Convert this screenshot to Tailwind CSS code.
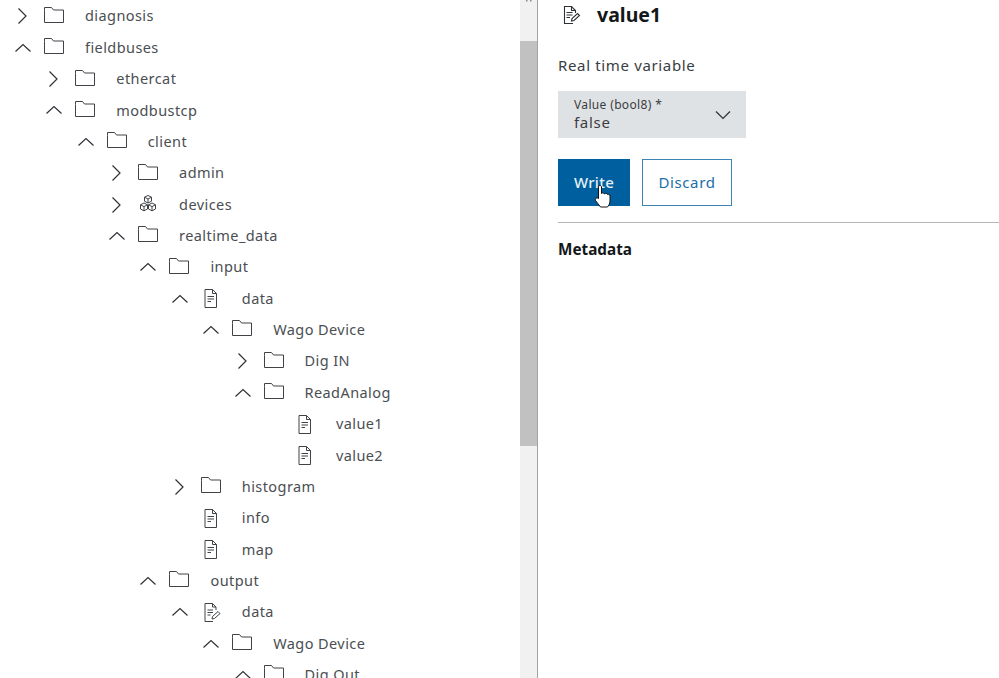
<!DOCTYPE html>
<html lang="en">
<head>
  <meta charset="UTF-8">
  <title>Data Layer</title>
  <script src="https://cdn.jsdelivr.net/npm/@tailwindcss/browser@4"></script>
</head>
<body class="h-[678px] overflow-hidden bg-white text-[#4a4e52] font-['Noto_Sans',sans-serif]">

  <div class="flex h-full">
    <!-- tree -->
    <div id="tree" class="w-[520px] h-full overflow-hidden pt-[0.7px] shrink-0"></div>

    <!-- scrollbar -->
    <div class="relative w-[17px] h-full bg-[#f1f1f1] shrink-0">
      <div class="absolute left-0 right-0 top-[41px] h-[405px] bg-[#c1c1c1]"></div>
      <svg class="absolute left-[5px] top-0" width="8" height="3" viewBox="0 0 8 3" fill="#8a8a8a"><path d="M1 0H2.5V1.5H1ZM5 0H6.5V1.5H5Z"/></svg>
    </div>

    <!-- detail -->
    <div class="flex-1 border-l border-[#a3a3a3] pl-5 pt-[3px]">
      <div class="flex items-center h-6 pl-[3px] gap-[16px]">
        <svg width="20" height="20" viewBox="0 0 20 20" fill="none" stroke="#2e3135" stroke-width="1.1">
          <path d="M12 18.5H3.5V1.5H10.5L14.5 5.5V8M10.5 1.5V5.5H14.5"/>
          <path d="M5.5 7.5H11.5M5.5 10H11.5M5.5 12.5H9"/>
          <path d="M10.5 16L11 13.5L16.5 8.5L18.5 10.5L13 15.5Z"/>
        </svg>
        <div class="text-[19.5px] leading-6 font-bold text-[#14171a]">value1</div>
      </div>

      <div class="mt-[26px] text-[15px] leading-[24px] tracking-[0.65px] text-[#3a3d41]">Real time variable</div>

      <div class="mt-[14px] flex items-center justify-between w-[188px] h-[47px] bg-[#dfe2e4] pl-4 pr-[15px]">
        <div class="text-[#3a3d41]">
          <div class="text-[12px] leading-[14px] tracking-[0.35px]">Value (bool8) *</div>
          <div class="text-[15px] leading-[20px] tracking-[0.7px]">false</div>
        </div>
        <svg width="16" height="16" viewBox="0 0 16 16" fill="none" stroke="#2e3135" stroke-width="1.2"><path d="M1 4.5L8 11.5L15 4.5"/></svg>
      </div>

      <div class="relative flex gap-3 mt-[21px]">
        <button class="w-[72px] h-[47px] bg-[#005f9e] text-[#e6f0f6] text-[15px] font-medium tracking-[0.3px]">Write</button>
        <button class="w-[90px] h-[47px] border border-[#3c84b3] text-[#1a6fa8] text-[15px] tracking-[0.6px]">Discard</button>
        <!-- mouse pointer -->
        <svg class="absolute left-[36px] top-[25px]" width="18" height="24" viewBox="0 0 18 24" stroke="#111" stroke-width="1">
          <path fill="#fff" d="M4.5 14.5V3C4.5 1 7.5 1 7.5 3V9.5C8 8.5 10 8.5 10.5 10C11 9 13 9 13.5 10.5C14 10 16 10.2 16 12V17C16 20 14.5 21.5 13.5 23H6.5C5 20.5 3 19 1.5 16.5C0.5 14.5 3 13 4.5 14.5Z"/>
        </svg>
      </div>

      <div class="mt-4 h-px bg-[#b5b5b5]"></div>

      <div class="mt-4 text-[15.3px] leading-5 font-bold text-[#14171a]">Metadata</div>
    </div>
  </div>

<script>
  // [level, open state, icon, label]
  const rows = [
    [0, 'closed', 'folder', 'diagnosis'],
    [0, 'open', 'folder', 'fieldbuses'],
    [1, 'closed', 'folder', 'ethercat'],
    [1, 'open', 'folder', 'modbustcp'],
    [2, 'open', 'folder', 'client'],
    [3, 'closed', 'folder', 'admin'],
    [3, 'closed', 'cubes', 'devices'],
    [3, 'open', 'folder', 'realtime_data'],
    [4, 'open', 'folder', 'input'],
    [5, 'open', 'doc', 'data'],
    [6, 'open', 'folder', 'Wago Device'],
    [7, 'closed', 'folder', 'Dig IN'],
    [7, 'open', 'folder', 'ReadAnalog'],
    [8, '', 'doc', 'value1'],
    [8, '', 'doc', 'value2'],
    [5, 'closed', 'folder', 'histogram'],
    [5, '', 'doc', 'info'],
    [5, '', 'doc', 'map'],
    [4, 'open', 'folder', 'output'],
    [5, 'open', 'docedit', 'data'],
    [6, 'open', 'folder', 'Wago Device'],
    [7, 'open', 'folder', 'Dig Out']
  ];

  const chevrons = {
    closed: '<path d="M3.5 0.5L11 8L3.5 15.5"/>',
    open: '<path d="M0.5 11.5L8 4.5L15.5 11.5"/>',
    '': ''
  };

  const icons = {
    folder: '<path d="M1.5 4.5V1.5H8.5L10.5 4H20.5V16.5H1.5Z" stroke-linejoin="round"/>',
    doc: '<path d="M5 1.5H12.5L16.5 5.5V19.5H5ZM12.5 1.5V5.5H16.5M7.5 8.5H14M7.5 11H14M7.5 13.5H11"/>',
    docedit: '<path d="M13 19.5H5V1.5H12.5L16 5V8M12.5 1.5V5H16M7.5 8H13M7.5 10.5H13M7.5 13H10.5"/><path d="M12 17L12.5 14.5L18 9.5L20 11.5L14.5 16.5Z"/>',
    cubes: '<path d="M11 1.5L14.5 3.2V7.2L11 9L7.5 7.2V3.2ZM7.5 3.2L11 5L14.5 3.2M11 5V9M7 9L10.5 10.8V15L7 16.8L3.5 15V10.8ZM3.5 10.8L7 12.6L10.5 10.8M7 12.6V16.8M15 9L18.5 10.8V15L15 16.8L11.5 15V10.8ZM11.5 10.8L15 12.6L18.5 10.8M15 12.6V16.8"/>'
  };

  const tree = document.getElementById('tree');
  tree.innerHTML = rows.map(([level, state, icon, label]) => `
    <div class="flex items-center h-[31.36px] pl-[15px]" style="margin-left:${level * 31.36}px">
      <svg class="shrink-0" width="16" height="16" viewBox="0 0 16 16" fill="none" stroke="#2e3135" stroke-width="1.2">${chevrons[state]}</svg>
      <svg class="shrink-0 ml-[12px]" width="22" height="21" viewBox="0 0 22 21" fill="none" stroke="#3f4347" stroke-width="1">${icons[icon]}</svg>
      <span class="ml-[20px] text-[14.5px] tracking-[0.42px] whitespace-nowrap">${label}</span>
    </div>
  `).join('');
</script>

</body>
</html>
